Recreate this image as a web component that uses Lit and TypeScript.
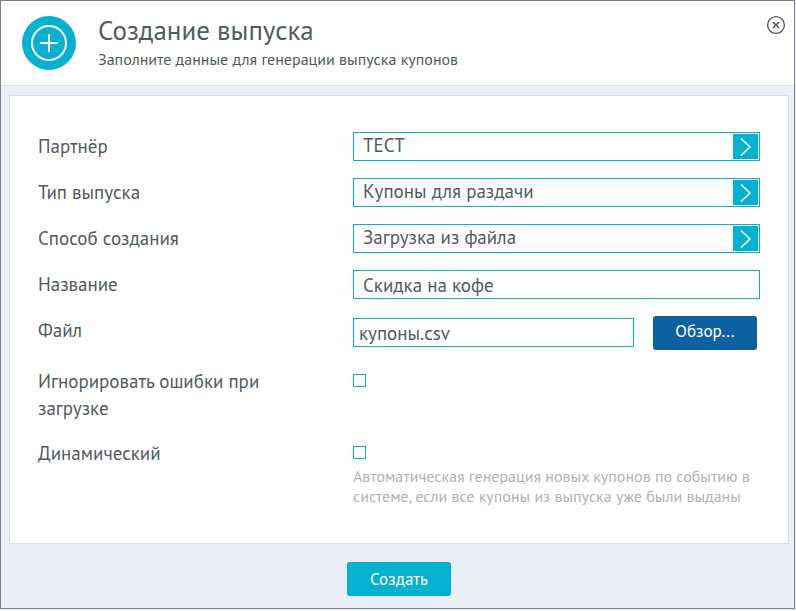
import { LitElement, html, css, svg } from "lit";
import { customElement, property, state } from "lit/decorators.js";

const chevron = svg`<path d="M8 4.5 L17 13 L8 21.5" fill="none" stroke="#fff" stroke-width="1.6"/>`;

@customElement("select-field")
class SelectField extends LitElement {
  @property() label = "";
  @property() value = "";

  static styles = css`
    :host {
      display: block;
    }
    .row {
      display: grid;
      grid-template-columns: 315px 1fr;
    }
    .label {
      padding-top: 1px;
      line-height: 27px;
    }
    .box {
      display: grid;
      align-items: center;
    }
    .select {
      grid-area: 1 / 1;
      box-sizing: border-box;
      width: 100%;
      height: 29px;
      margin: 0;
      padding: 0 32px 4px 9px;
      border: 1px solid #05b1d1;
      border-radius: 0;
      background: #fff;
      appearance: none;
      font: inherit;
      color: inherit;
    }
    .arrow {
      grid-area: 1 / 1;
      justify-self: end;
      width: 25px;
      height: 25px;
      margin-right: 2px;
      background: #05b1d1;
      pointer-events: none;
    }
  `;

  render() {
    return html`
      <div class="row">
        <label class="label" for="field">${this.label}</label>
        <div class="box">
          <select class="select" id="field">
            <option>${this.value}</option>
          </select>
          <svg class="arrow" viewBox="0 0 25 25" aria-hidden="true">${chevron}</svg>
        </div>
      </div>
    `;
  }
}

@customElement("app-root")
class AppRoot extends LitElement {
  @state() private selects = [
    { label: "Партнёр", value: "ТЕСТ" },
    { label: "Тип выпуска", value: "Купоны для раздачи" },
    { label: "Способ создания", value: "Загрузка из файла" },
  ];

  static styles = css`
    :host {
      display: block;
      padding: 0 1px 2px 0;
      background: #eceff7;
      font-family: "PT Sans", "Noto Sans", sans-serif;
      font-size: 19px;
      color: #505b60;
    }
    .dialog {
      border: 1px solid #7f7f7f;
      background: #eceff7;
    }
    .header {
      display: flex;
      align-items: flex-start;
      padding: 14px 8px 14px 21px;
      border-bottom: 1px solid #dde1e4;
      background: #fff;
    }
    .logo {
      flex: none;
      width: 54px;
      height: 54px;
      margin: 1px 22px 1px 0;
    }
    .heading {
      flex: 1;
    }
    .title {
      margin: 0;
      font-size: 27px;
      line-height: 30px;
      font-weight: 400;
    }
    .subtitle {
      margin: 3px 0 0;
      font-size: 16px;
      line-height: 22px;
    }
    .close {
      flex: none;
      width: 20px;
      height: 20px;
      padding: 0;
      border: 0;
      background: none;
      color: inherit;
    }
    .icon {
      display: block;
      width: 100%;
      height: 100%;
    }
    .card {
      display: flex;
      flex-direction: column;
      gap: 17px;
      margin: 9px 5px 0 8px;
      padding: 36px 28px 37px;
      border: 1px solid #dde1e4;
      background: #fff;
    }
    .row {
      display: grid;
      grid-template-columns: 315px 1fr;
    }
    .label {
      padding: 1px 64px 0 0;
      line-height: 27px;
    }
    .input {
      box-sizing: border-box;
      width: 100%;
      height: 29px;
      margin: 0;
      padding: 0 9px;
      border: 1px solid #05b1d1;
      border-radius: 0;
      background: #fff;
      font: inherit;
      color: inherit;
    }
    .file {
      display: flex;
      align-items: flex-start;
      gap: 19px;
      padding-right: 3px;
    }
    .path {
      flex: 1;
      min-width: 0;
      margin-top: 2px;
      padding: 0 5px;
    }
    .button {
      width: 104px;
      height: 34px;
      padding: 0 0 4px;
      border: 0;
      border-radius: 3px;
      background: #05b1d1;
      font: inherit;
      font-size: 17px;
      font-weight: 500;
      color: #fff;
    }
    .browse {
      background: #0d61a0;
    }
    .submit {
      padding: 0;
    }
    .check {
      display: block;
      box-sizing: border-box;
      width: 13px;
      height: 13px;
      margin: 7px 0;
      border: 1px solid #05b1d1;
      border-radius: 0;
      background: #fff;
      appearance: none;
    }
    .hint {
      margin: 0;
      font-size: 16px;
      line-height: 20px;
      color: #adb3b7;
    }
    .footer {
      display: flex;
      justify-content: center;
      padding: 18px 5px 12px 8px;
    }
  `;

  render() {
    return html`
      <form class="dialog" @submit=${(e: Event) => e.preventDefault()}>
        <header class="header">
          <svg class="logo" viewBox="0 0 54 54" aria-hidden="true">
            <circle cx="27" cy="27" r="27" fill="#05b1d1" />
            <circle cx="27" cy="27" r="17" fill="none" stroke="#fff" stroke-width="2" />
            <path d="M27 18v18M18 27h18" stroke="#fff" stroke-width="2" />
          </svg>
          <div class="heading">
            <h1 class="title">Создание выпуска</h1>
            <p class="subtitle">Заполните данные для генерации выпуска купонов</p>
          </div>
          <button class="close" type="button" aria-label="Закрыть">
            <svg class="icon" viewBox="0 0 20 20" aria-hidden="true">
              <circle cx="10" cy="10" r="8.4" fill="none" stroke="currentColor" stroke-width="1.4" />
              <path d="M7 7l6 6M13 7l-6 6" stroke="currentColor" stroke-width="1.6" />
            </svg>
          </button>
        </header>
        <main class="card">
          ${this.selects.map(
            (s) => html`<select-field .label=${s.label} .value=${s.value}></select-field>`
          )}
          <div class="row">
            <label class="label" for="name">Название</label>
            <input class="input" id="name" type="text" value="Скидка на кофе" />
          </div>
          <div class="row">
            <label class="label" for="path">Файл</label>
            <div class="file">
              <input class="input path" id="path" type="text" value="купоны.csv" />
              <button class="button browse" type="button">Обзор...</button>
            </div>
          </div>
          <div class="row">
            <label class="label" for="ignore">Игнорировать ошибки при загрузке</label>
            <div><input class="check" id="ignore" type="checkbox" /></div>
          </div>
          <div class="row">
            <label class="label" for="dynamic">Динамический</label>
            <div>
              <input class="check" id="dynamic" type="checkbox" aria-describedby="hint" />
              <p class="hint" id="hint">
                Автоматическая генерация новых купонов по событию в системе, если все купоны из выпуска уже были выданы
              </p>
            </div>
          </div>
        </main>
        <footer class="footer">
          <button class="button submit" type="submit">Создать</button>
        </footer>
      </form>
    `;
  }
}
